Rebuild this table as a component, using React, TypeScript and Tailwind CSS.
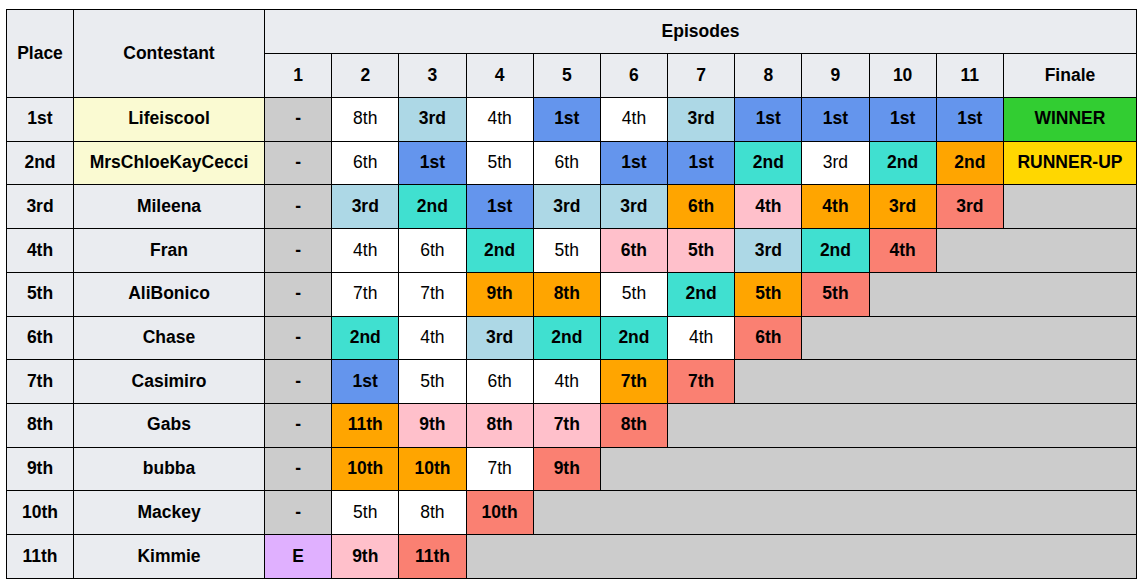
import React from "react";

type Cell = { t: string; c: string; b?: boolean } | { fill: number };

const C = {
  w: "bg-white",
  lb: "bg-[#add8e6]",
  bl: "bg-[#6495ed]",
  tq: "bg-[#40e0d0]",
  or: "bg-[#ffa500]",
  pk: "bg-[#ffc0cb]",
  sa: "bg-[#fa8072]",
  gr: "bg-[#cccccc]",
  lg: "bg-[#32cd32]",
  gd: "bg-[#ffd700]",
  ma: "bg-[#e0b0ff]",
};

const w = (t: string): Cell => ({ t, c: C.w, b: false });
const x = (t: string, c: string): Cell => ({ t, c, b: true });

const rows: { place: string; name: string; yellow?: boolean; cells: Cell[] }[] = [
  {
    place: "1st",
    name: "Lifeiscool",
    yellow: true,
    cells: [x("-", C.gr), w("8th"), x("3rd", C.lb), w("4th"), x("1st", C.bl), w("4th"), x("3rd", C.lb), x("1st", C.bl), x("1st", C.bl), x("1st", C.bl), x("1st", C.bl), x("WINNER", C.lg)],
  },
  {
    place: "2nd",
    name: "MrsChloeKayCecci",
    yellow: true,
    cells: [x("-", C.gr), w("6th"), x("1st", C.bl), w("5th"), w("6th"), x("1st", C.bl), x("1st", C.bl), x("2nd", C.tq), w("3rd"), x("2nd", C.tq), x("2nd", C.or), x("RUNNER-UP", C.gd)],
  },
  {
    place: "3rd",
    name: "Mileena",
    cells: [x("-", C.gr), x("3rd", C.lb), x("2nd", C.tq), x("1st", C.bl), x("3rd", C.lb), x("3rd", C.lb), x("6th", C.or), x("4th", C.pk), x("4th", C.or), x("3rd", C.or), x("3rd", C.sa), { fill: 1 }],
  },
  {
    place: "4th",
    name: "Fran",
    cells: [x("-", C.gr), w("4th"), w("6th"), x("2nd", C.tq), w("5th"), x("6th", C.pk), x("5th", C.pk), x("3rd", C.lb), x("2nd", C.tq), x("4th", C.sa), { fill: 2 }],
  },
  {
    place: "5th",
    name: "AliBonico",
    cells: [x("-", C.gr), w("7th"), w("7th"), x("9th", C.or), x("8th", C.or), w("5th"), x("2nd", C.tq), x("5th", C.or), x("5th", C.sa), { fill: 3 }],
  },
  {
    place: "6th",
    name: "Chase",
    cells: [x("-", C.gr), x("2nd", C.tq), w("4th"), x("3rd", C.lb), x("2nd", C.tq), x("2nd", C.tq), w("4th"), x("6th", C.sa), { fill: 4 }],
  },
  {
    place: "7th",
    name: "Casimiro",
    cells: [x("-", C.gr), x("1st", C.bl), w("5th"), w("6th"), w("4th"), x("7th", C.or), x("7th", C.sa), { fill: 5 }],
  },
  {
    place: "8th",
    name: "Gabs",
    cells: [x("-", C.gr), x("11th", C.or), x("9th", C.pk), x("8th", C.pk), x("7th", C.pk), x("8th", C.sa), { fill: 6 }],
  },
  {
    place: "9th",
    name: "bubba",
    cells: [x("-", C.gr), x("10th", C.or), x("10th", C.or), w("7th"), x("9th", C.sa), { fill: 7 }],
  },
  {
    place: "10th",
    name: "Mackey",
    cells: [x("-", C.gr), w("5th"), w("8th"), x("10th", C.sa), { fill: 8 }],
  },
  {
    place: "11th",
    name: "Kimmie",
    cells: [x("E", C.ma), x("9th", C.pk), x("11th", C.sa), { fill: 9 }],
  },
];

const bd = "border border-black p-0 pb-[2px]";

export default function App() {
  return (
    <div className="bg-white w-[1147px] h-[587px] pt-[9px] pl-[6px]" style={{ fontFamily: '"Liberation Sans", Arial, sans-serif' }}>
      <table className="table-fixed border-collapse text-[17.5px] leading-[20px] text-black w-[1131px]">
        <colgroup>
          <col className="w-[67px]" />
          <col className="w-[191px]" />
          {Array.from({ length: 11 }).map((_, i) => (
            <col key={i} className="w-[67.18px]" />
          ))}
          <col className="w-[133px]" />
        </colgroup>
        <thead>
          <tr className="h-[44px]">
            <th rowSpan={2} className={`${bd} bg-[#eaecf0] font-bold text-center`}>Place</th>
            <th rowSpan={2} className={`${bd} bg-[#eaecf0] font-bold text-center`}>Contestant</th>
            <th colSpan={12} className={`${bd} bg-[#eaecf0] font-bold text-center`}>Episodes</th>
          </tr>
          <tr className="h-[44px]">
            {["1", "2", "3", "4", "5", "6", "7", "8", "9", "10", "11", "Finale"].map((h) => (
              <th key={h} className={`${bd} bg-[#eaecf0] font-bold text-center`}>{h}</th>
            ))}
          </tr>
        </thead>
        <tbody>
          {rows.map((r) => (
            <tr key={r.place} className="h-[43.73px]">
              <td className={`${bd} bg-[#eaecf0] font-bold text-center`}>{r.place}</td>
              <td className={`${bd} ${r.yellow ? "bg-[#fafad2]" : "bg-[#eaecf0]"} font-bold text-center`}>{r.name}</td>
              {r.cells.map((c, i) =>
                "fill" in c ? (
                  <td key={i} colSpan={c.fill} className={`${bd} bg-[#cccccc]`}></td>
                ) : (
                  <td key={i} className={`${bd} ${c.c} ${c.b ? "font-bold" : "font-normal"} text-center`}>{c.t}</td>
                )
              )}
            </tr>
          ))}
        </tbody>
      </table>
    </div>
  );
}
